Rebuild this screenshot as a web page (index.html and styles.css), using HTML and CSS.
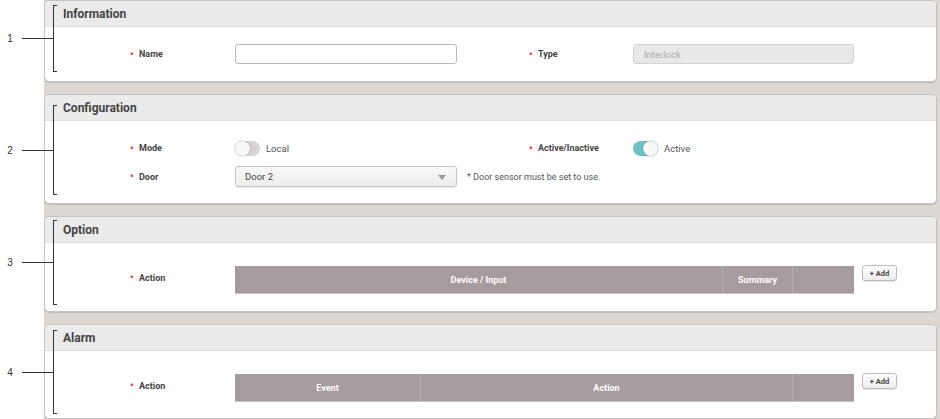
FILE: index.html
```html
<!DOCTYPE html>
<html>
<head>
<meta charset="utf-8">
<link rel="stylesheet" href="styles.css">
</head>
<body>
<div class="main">
  <section class="panel">
    <div class="anno anno-1"><span class="num">1</span><span class="conn"></span><span class="brk"></span></div>
    <div class="panel-head">Information</div>
    <div class="panel-body body-info">
      <div class="row">
        <div class="label"><span class="req">•</span>Name</div>
        <div class="ctrl"><div class="input"></div></div>
        <div class="spacer"></div>
        <div class="label"><span class="req">•</span>Type</div>
        <div class="ctrl"><div class="input input-disabled">Interlock</div></div>
      </div>
    </div>
  </section>

  <section class="panel">
    <div class="anno anno-2"><span class="num">2</span><span class="conn"></span><span class="brk"></span></div>
    <div class="panel-head">Configuration</div>
    <div class="panel-body body-config">
      <div class="row row-toggle">
        <div class="label"><span class="req">•</span>Mode</div>
        <div class="ctrl"><span class="toggle"><span class="knob"></span></span><span class="toggle-text">Local</span></div>
        <div class="spacer"></div>
        <div class="label"><span class="req">•</span>Active/Inactive</div>
        <div class="ctrl"><span class="toggle toggle-on"><span class="knob"></span></span><span class="toggle-text">Active</span></div>
      </div>
      <div class="row row-door">
        <div class="label"><span class="req">•</span>Door</div>
        <div class="ctrl"><div class="select">Door 2<span class="caret"></span></div></div>
        <div class="note">* Door sensor must be set to use.</div>
      </div>
    </div>
  </section>

  <section class="panel">
    <div class="anno anno-3"><span class="num">3</span><span class="conn"></span><span class="brk"></span></div>
    <div class="panel-head">Option</div>
    <div class="panel-body body-table">
      <div class="row row-table">
        <div class="label label-table"><span class="req">•</span>Action</div>
        <div class="table">
          <div class="th th-device">Device / Input</div>
          <div class="th th-summary">Summary</div>
          <div class="th th-last"></div>
        </div>
        <button class="add">+ Add</button>
      </div>
    </div>
  </section>

  <section class="panel">
    <div class="anno anno-4"><span class="num">4</span><span class="conn"></span><span class="brk"></span></div>
    <div class="panel-head">Alarm</div>
    <div class="panel-body body-table body-alarm">
      <div class="row row-table">
        <div class="label label-table"><span class="req">•</span>Action</div>
        <div class="table">
          <div class="th th-event">Event</div>
          <div class="th th-action">Action</div>
          <div class="th th-last"></div>
        </div>
        <button class="add">+ Add</button>
      </div>
    </div>
  </section>
</div>
</body>
</html>
```

FILE: styles.css
```css
* { box-sizing: border-box; }
html, body { margin: 0; padding: 0; }
body {
  width: 940px;
  height: 419px;
  overflow: hidden;
  background: #ffffff;
  font-family: Roboto, "Liberation Sans", sans-serif;
  color: #444;
}
.main {
  margin-left: 44px;
  height: 419px;
  background: #dcd7d3;
  padding-right: 3px;
  display: flex;
  flex-direction: column;
  gap: 12px;
}
.panel {
  position: relative;
  flex-shrink: 0;
  background: #fff;
  border: 1px solid #c6c2c0;
  border-radius: 5px;
  box-shadow: 0 1px 1px rgba(0,0,0,0.12);
}
.panel-head {
  height: 26px;
  background: #ebebeb;
  border-bottom: 1px solid #e0dfdf;
  border-radius: 5px 5px 0 0;
  padding-left: 18px;
  display: flex;
  align-items: center;
  font-size: 12px;
  font-weight: bold;
  color: #444;
}
.panel-body { padding-left: 85px; }
.body-info { padding-top: 17px; padding-bottom: 17px; }
.body-config { padding-top: 17px; padding-bottom: 16px; display: flex; flex-direction: column; gap: 8px; }
.body-table { padding-top: 23px; padding-bottom: 17px; }
.body-alarm { padding-top: 23px; padding-bottom: 16px; }

.row {
  display: grid;
  grid-template-columns: 105px 222px 72px 104px 221px;
  align-items: center;
}
.row-toggle { height: 20px; }
.row-door { grid-template-columns: 105px 222px auto; }
.row-table { grid-template-columns: 105px 619px auto; align-items: start; }

.label {
  font-size: 9px;
  font-weight: bold;
  color: #444;
  display: flex;
  align-items: center;
}
.label-table { padding-top: 6px; }
.req {
  color: #ec3b30;
  font-size: 10px;
  width: 9px;
  display: inline-block;
}
.ctrl { display: flex; align-items: center; }

.input {
  width: 222px;
  height: 20px;
  border: 1px solid #b9b9b9;
  border-radius: 3px;
  background: #fff;
}
.input-disabled {
  width: 221px;
  background: #e8e8e8;
  border-color: #d2d2d2;
  color: #aaa;
  font-size: 9.5px;
  padding-left: 10px;
  display: flex;
  align-items: center;
}

.toggle {
  position: relative;
  width: 25px;
  height: 15px;
  border-radius: 8px;
  background: #d9d4d4;
  display: inline-block;
}
.toggle .knob {
  position: absolute;
  left: 0;
  top: 0;
  width: 15px;
  height: 15px;
  border-radius: 50%;
  background: #f8f8f8;
  box-shadow: 0 0 2px rgba(0,0,0,0.35);
}
.toggle-on { background: #6cc2c4; }
.toggle-on .knob { left: 10px; }
.toggle-text {
  margin-left: 6px;
  font-size: 9.5px;
  color: #555;
}

.select {
  position: relative;
  width: 222px;
  height: 21px;
  border: 1px solid #c4c4c4;
  border-radius: 3px;
  background: linear-gradient(#f9f9f9, #ececec);
  box-shadow: 0 1px 1px rgba(0,0,0,0.08);
  font-size: 9.5px;
  color: #444;
  padding-left: 9px;
  display: flex;
  align-items: center;
}
.caret {
  position: absolute;
  right: 10px;
  top: 8px;
  width: 0;
  height: 0;
  border-left: 4px solid transparent;
  border-right: 4px solid transparent;
  border-top: 5px solid #999;
}
.note {
  margin-left: 10px;
  font-size: 9px;
  color: #555;
}

.table {
  display: flex;
  height: 28px;
  background: #a69b9d;
  border-bottom: 1px solid #c9c2c3;
}
.th {
  display: flex;
  align-items: center;
  justify-content: center;
  color: #fff;
  font-size: 9px;
  font-weight: bold;
  border-right: 1px solid #b5acae;
}
.th-last { border-right: none; flex: 1; }
.th-device { width: 488px; }
.th-summary { width: 70px; }
.th-event { width: 186px; }
.th-action { width: 372px; }

.add {
  margin-left: 8px;
  width: 35px;
  height: 16px;
  margin-top: -1px;
  padding: 0;
  border: 1px solid #bcbcbc;
  border-radius: 3px;
  background: linear-gradient(#ffffff, #ededed);
  box-shadow: 0 1px 1px rgba(0,0,0,0.1);
  font-family: Roboto, "Liberation Sans", sans-serif;
  font-size: 7.5px;
  font-weight: bold;
  color: #444;
}

.anno {
  position: absolute;
  left: -45px;
  width: 57px;
  display: flex;
  align-items: center;
}
.anno-1 { top: 4px; bottom: 9px; }
.anno-2 { top: 10px; bottom: 8px; }
.anno-3 { top: 3px; bottom: 6px; }
.anno-4 { top: 5px; bottom: 4px; }
.num {
  width: 20px;
  text-align: center;
  font-size: 10px;
  color: #333;
  font-family: "Liberation Sans", sans-serif;
}
.conn {
  width: 31px;
  height: 1px;
  margin-left: 2px;
  background: #333;
}
.brk {
  align-self: stretch;
  width: 4px;
  border-left: 1px solid #333;
  border-top: 1px solid #333;
  border-bottom: 1px solid #333;
}
```
